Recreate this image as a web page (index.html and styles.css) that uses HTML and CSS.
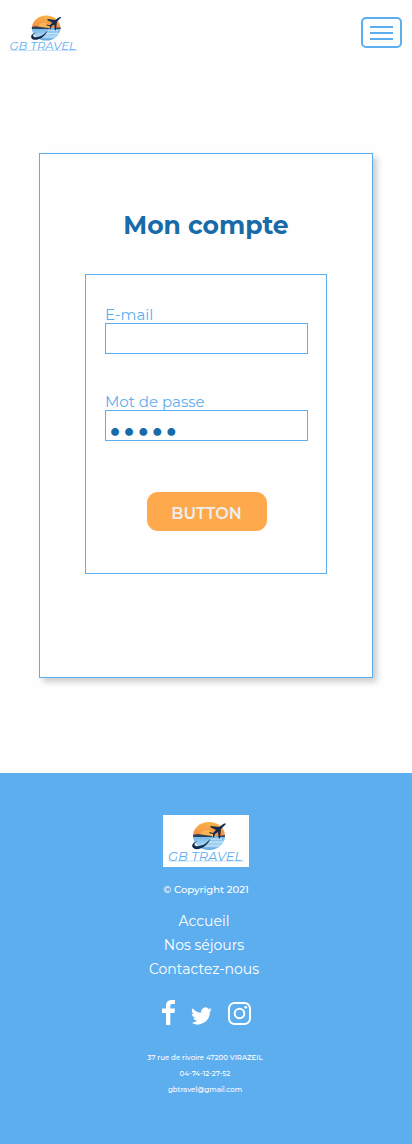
FILE: index.html
```html
<!DOCTYPE html>
<html lang="fr">
<head>
<meta charset="utf-8">
<meta name="viewport" content="width=device-width, initial-scale=1">
<title>GB Travel</title>
<link rel="stylesheet" href="styles.css">
</head>
<body>
<svg class="defs" width="0" height="0" aria-hidden="true">
  <defs>
    <linearGradient id="sky" x1="0" y1="0" x2="0" y2="1"><stop offset="0" stop-color="#f8b54a"/><stop offset="1" stop-color="#f58a45"/></linearGradient>
    <linearGradient id="sea" x1="0" y1="0" x2="0" y2="1"><stop offset="0" stop-color="#6fb4e4"/><stop offset=".55" stop-color="#a5d3f2"/><stop offset="1" stop-color="#4f9fdc"/></linearGradient>
    <clipPath id="disc"><ellipse cx="46" cy="21" rx="16" ry="14"/></clipPath>
    <symbol id="logo" viewBox="0 0 86 52">
      <g clip-path="url(#disc)">
        <rect x="29" y="6" width="34" height="16" fill="url(#sky)"/>
        <ellipse cx="44" cy="20" rx="7" ry="5" fill="#fbb552"/>
        <rect x="29" y="21" width="34" height="15" fill="url(#sea)"/>
        <path d="M29 20l6-1 7 1 7 1v1H29zM55 21l9-1v2h-9z" fill="#30415c"/>
        <path d="M46 24h13M45 27h16M41 31h17" stroke="#d3ebfa" stroke-width="1"/>
      </g>
      <path d="M48 22c-3 7-11 10-15 9-3-1-1-4 2-5-6 1-8 6-3 8 6 1 14-4 16-12z" fill="#142b4c"/>
      <path d="M63 9c-1-1-3 0-4 1l-3 2-8-1-1 1 6 3-3 3-3-1-1 1 4 1v4l1-1 1-3 3-2 1 7 1-1 1-9 3-3z" fill="#142b4c"/>
      <text x="5" y="46" class="logo-text">GB TRAVEL</text>
      <path d="M6 46h75" stroke="#5daeef" stroke-width=".4"/>
    </symbol>
  </defs>
</svg>

<header class="header">
  <a href="#" aria-label="GB Travel"><svg class="header-logo"><use href="#logo"/></svg></a>
  <button class="menu" type="button" aria-label="Menu"><span class="bar"></span><span class="bar"></span><span class="bar"></span></button>
</header>

<main class="main">
  <section class="card">
    <h1 class="title">Mon compte</h1>
    <form class="form">
      <div class="field">
        <label class="label" for="email">E-mail</label>
        <input class="input" id="email" type="email">
      </div>
      <div class="field">
        <label class="label" for="password">Mot de passe</label>
        <input class="input" id="password" type="password" value="12345">
      </div>
      <button class="submit" type="button">BUTTON</button>
    </form>
  </section>
</main>

<footer class="footer">
  <svg class="footer-logo" role="img" aria-label="GB Travel"><use href="#logo"/></svg>
  <p class="copyright">© Copyright 2021</p>
  <nav class="links">
    <a href="#">Accueil</a>
    <a href="#">Nos séjours</a>
    <a href="#">Contactez-nous</a>
  </nav>
  <div class="social">
    <a href="#" aria-label="Facebook"><svg width="13" height="25" viewBox="0 0 13 25"><path d="M4 25V13H0V8.500h4V6c0-4 2-6 6-6h3v4h-2.500C8.500 4 8.300 5 8.300 6.500v2H13l-.6 4.500H8.300v12z" fill="#fff"/></svg></a>
    <a href="#" aria-label="Twitter"><svg width="21" height="18" viewBox="0 2 24 20"><path d="M24 4.600a10 10 0 0 1-2.800.8 5 5 0 0 0 2.100-2.700 10 10 0 0 1-3.100 1.200 4.900 4.900 0 0 0-8.400 4.500A14 14 0 0 1 1.700 3.200a4.900 4.900 0 0 0 1.500 6.500 5 5 0 0 1-2.200-.6v.1a4.900 4.900 0 0 0 3.900 4.800 5 5 0 0 1-2.200.1 4.900 4.900 0 0 0 4.600 3.400A9.900 9.900 0 0 1 0 19.500a14 14 0 0 0 21.500-12.400A10 10 0 0 0 24 4.600z" fill="#fff"/></svg></a>
    <a href="#" aria-label="Instagram"><svg width="23" height="23" viewBox="0 0 23 23" fill="none" stroke="#fff" stroke-width="2"><rect x="1" y="1" width="21" height="21" rx="5.500"/><circle cx="11.500" cy="11.500" r="4.800"/><circle cx="17.700" cy="5.300" r="1.400" fill="#fff" stroke="none"/></svg></a>
  </div>
  <address class="address">
    <span>37 rue de rivoire 47200 VIRAZEIL</span>
    <span>04-74-12-27-52</span>
    <span>gbtravel@gmail.com</span>
  </address>
</footer>
</body>
</html>
```

FILE: styles.css
```css
* {
  box-sizing: border-box;
}

body {
  margin: 0;
  font-family: Montserrat, Inter, sans-serif;
  background: #fefefe;
}

a {
  color: inherit;
  text-decoration: none;
}

svg {
  display: block;
}

.defs {
  position: absolute;
}

.logo-text {
  font: italic 13px Montserrat, Inter, sans-serif;
  fill: #5daeef;
}

.header {
  display: flex;
  justify-content: space-between;
  align-items: center;
  padding: 9px 10px 9px 5px;
}

.header-logo {
  width: 77px;
  height: 47px;
}

.menu {
  display: flex;
  flex-direction: column;
  align-items: center;
  justify-content: center;
  gap: 4px;
  width: 41px;
  height: 31px;
  padding: 0;
  border: 2px solid #5daeef;
  border-radius: 5px;
  background: none;
}

.bar {
  width: 23px;
  height: 2px;
  background: #5daeef;
}

.main {
  padding: 88px 39px 95px;
}

.card {
  padding: 54px 45px 103px;
  border: 1px solid #5daeef;
  box-shadow: 4px 4px 6px rgba(0, 0, 0, 0.2);
}

.title {
  margin: 0 0 32px;
  font-size: 25px;
  line-height: 34px;
  font-weight: 700;
  text-align: center;
  color: #176ba8;
}

.form {
  display: flex;
  flex-direction: column;
  gap: 40px;
  padding: 32px 18px 42px 19px;
  border: 1px solid #5daeef;
}

.field {
  display: flex;
  flex-direction: column;
}

.label {
  font-size: 15px;
  line-height: 16px;
  color: #5daeef;
}

.input {
  width: 100%;
  height: 31px;
  padding: 8px 2px 0;
  border: 1px solid #5daeef;
  border-radius: 0;
  outline: 0;
  background: none;
  font: 25px Inter, sans-serif;
  color: #176ba8;
}

.submit {
  align-self: center;
  width: 120px;
  height: 39px;
  margin-top: 11px;
  padding: 3px 0 0;
  border: 0;
  border-radius: 11px;
  background: #ffa94d;
  font: 600 16px Montserrat, Inter, sans-serif;
  color: #eee;
}

.footer {
  display: flex;
  flex-direction: column;
  align-items: center;
  padding: 42px 0 46px;
  background: #5daeef;
  color: #fff;
}

.footer-logo {
  width: 86px;
  height: 52px;
  background: #fff;
}

.copyright {
  margin: 15px 0 11px;
  font-size: 10px;
  line-height: 16px;
  font-weight: 500;
}

.links {
  display: flex;
  flex-direction: column;
  align-items: center;
  padding-right: 4px;
  font-size: 14px;
  line-height: 24px;
}

.social {
  display: flex;
  align-items: flex-end;
  gap: 16px;
  margin: 19px 0 25px;
}

.address {
  display: flex;
  flex-direction: column;
  align-items: center;
  padding-right: 2px;
  font-size: 7px;
  line-height: 16px;
  font-style: normal;
  font-weight: 500;
}
```
